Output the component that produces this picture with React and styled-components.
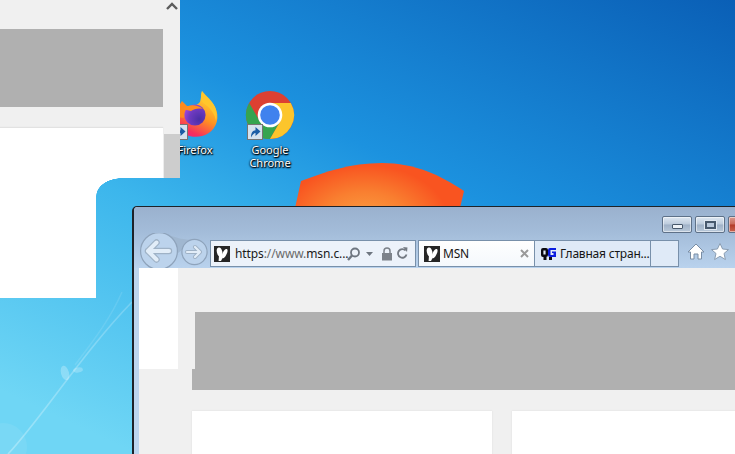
import React from "react";
import styled, { createGlobalStyle } from "styled-components";

const Global = createGlobalStyle`
  html, body { margin: 0; padding: 0; width: 735px; height: 454px; overflow: hidden; }
  #root { width: 735px; height: 454px; }
`;

const Desktop = styled.div`
  position: relative;
  width: 735px;
  height: 454px;
  overflow: hidden;
  font-family: "Noto Sans", "Open Sans", sans-serif;
  background: linear-gradient(205deg, #0a5fb6 0%, #1c92df 40%, #3cb6ec 60%, #6fd6f5 92%);
`;

const Wallpaper = styled.svg`
  position: absolute;
  inset: 0;
`;

const Shortcut = styled.div`
  position: absolute;
  left: ${(p) => p.$x}px;
  top: 90px;
  width: 72px;
  display: flex;
  flex-direction: column;
  align-items: center;
`;

const IconFrame = styled.div`
  position: relative;
  width: 50px;
  height: 50px;
  margin-bottom: 3px;
`;

const Arrow = styled.svg`
  position: absolute;
  left: ${(p) => p.$left}px;
  bottom: 0;
`;

const ShortcutLabel = styled.span`
  color: #fff;
  font-size: 11px;
  line-height: 13px;
  text-align: center;
  text-shadow: 0 1px 2px #000, 0 0 2px #000, 1px 1px 1px #012;
`;

/* left window */
const LeftWindow = styled.div`
  position: absolute;
  left: 0;
  top: 0;
  width: 180px;
`;

const UpperPane = styled.div`
  display: flex;
  height: 178px;
  background: #f0f0f0;
`;

const LeftMain = styled.div`
  width: 163px;
  display: flex;
  flex-direction: column;
  padding-top: 29px;
`;

const GrayBlock = styled.div`
  height: 78px;
  background: #b0b0b0;
`;

const WhitePanel = styled.div`
  flex: 1;
  margin-top: 21px;
  background: #fff;
  box-shadow: 0 -1px 1px #e2e2e2;
`;

const ScrollTrack = styled.div`
  flex: 1;
  display: flex;
  flex-direction: column;
  align-items: center;
  justify-content: space-between;
  padding-left: 1px;
`;

const ScrollUp = styled.svg`
  display: block;
  margin-top: 2px;
  margin-right: 1px;
`;

const ScrollThumb = styled.div`
  align-self: stretch;
  height: 44px;
  background: #cdcdcd;
`;

const LowerPane = styled.div`
  position: relative;
  width: 96px;
  height: 120px;
  background: #fff;
  &::after {
    content: "";
    position: absolute;
    left: 96px;
    top: 0;
    width: 26px;
    height: 18px;
    background: radial-gradient(ellipse 26px 18px at 100% 100%, transparent 98%, #fff 100%);
  }
`;

/* IE window */
const BrowserWindow = styled.div`
  position: absolute;
  left: 132px;
  top: 206px;
  width: 640px;
  height: 300px;
  box-sizing: border-box;
  border: 1px solid #1d2228;
  border-left-width: 2px;
  border-radius: 5px 5px 0 0;
  padding: 0 0 0 5px;
  display: flex;
  flex-direction: column;
  background: #bcd5ee;
`;

const Frame = styled.div`
  height: 61px;
  flex: none;
  display: flex;
  flex-direction: column;
  margin-left: -5px;
  padding-left: 5px;
  border-radius: 4px 4px 0 0;
  background: linear-gradient(180deg, #9ab1ce 0%, #a3bcd9 40%, #b9d2ed 100%);
`;

const TitleBar = styled.div`
  height: 33px;
  flex: none;
  display: flex;
  gap: 3px;
  padding: 9px 0 0 523px;
  box-sizing: border-box;
`;

const WinButton = styled.div`
  flex: none;
  box-sizing: border-box;
  width: 30px;
  height: 17px;
  display: flex;
  align-items: center;
  justify-content: center;
  border: 1px solid #5e7188;
  border-radius: 2px;
  background: ${(p) =>
    p.$close
      ? "linear-gradient(180deg,#d99a8f 0%,#c8695a 48%,#b23a2a 52%,#c9634f 100%)"
      : "linear-gradient(180deg,#dfe8f2 0%,#bccbdc 48%,#9fb1c7 52%,#b9c9da 100%)"};
  box-shadow: inset 0 0 0 1px rgba(255, 255, 255, 0.5);
`;

const MinGlyph = styled.div`
  width: 9px;
  height: 3px;
  margin-top: 3px;
  background: #eef3f8;
  border: 1px solid #48596c;
  border-radius: 1px;
`;

const MaxGlyph = styled.div`
  width: 7px;
  height: 4px;
  border: 2px solid #48596c;
  outline: 1px solid #dfe7f0;
  background: #b9c8da;
`;

const Toolbar = styled.div`
  height: 28px;
  display: flex;
  align-items: flex-start;
  position: relative;
`;

const NavSvg = styled.svg`
  position: absolute;
  left: -5px;
  top: -7px;
`;

const AddressBar = styled.div`
  margin-left: 71px;
  box-sizing: border-box;
  width: 206px;
  height: 27px;
  flex: none;
  display: flex;
  align-items: center;
  padding-left: 3px;
  border: 1px solid #7890aa;
  background: #ecf2fa;
`;

const Favicon = styled.svg`
  flex: none;
  display: block;
`;

const Url = styled.span`
  margin-left: 5px;
  width: 112px;
  flex: none;
  font-size: 12px;
  letter-spacing: -0.1px;
  color: #6a6a6a;
  white-space: nowrap;
  & b { font-weight: 400; color: #1a1a1a; }
`;

const AddressTools = styled.svg`
  flex: none;
  display: block;
`;

const Tabs = styled.div`
  margin-left: 2px;
  display: flex;
  flex: none;
  height: 27px;
`;

const Tab = styled.div`
  box-sizing: border-box;
  width: ${(p) => p.$w}px;
  height: 27px;
  display: flex;
  align-items: center;
  padding-left: ${(p) => p.$pad}px;
  border: 1px solid #7890aa;
  border-left-width: ${(p) => (p.$first ? 1 : 0)}px;
  background: ${(p) => (p.$active ? "linear-gradient(180deg,#fff,#f4f8fc)" : "#dfeaf7")};
  font-size: 12px;
  letter-spacing: -0.2px;
  color: #151515;
  white-space: nowrap;
`;

const TabTitle = styled.span`
  margin-left: ${(p) => p.$gap}px;
  flex: ${(p) => (p.$grow ? 1 : "none")};
`;

const TabClose = styled.svg`
  flex: none;
  margin-right: 5px;
`;

const CommandIcons = styled.svg`
  flex: none;
  margin-left: 9px;
  margin-top: 3px;
`;

const Content = styled.div`
  flex: 1;
  position: relative;
  background: #f0f0f0;
  display: flex;
  flex-direction: column;
`;

const TopRow = styled.div`
  display: flex;
  height: 101px;
  flex: none;
`;

const WhiteStub = styled.div`
  width: 39px;
  background: #fff;
`;

const Banner = styled.div`
  flex: 1;
  margin: 44px 0 0 17px;
  background: #b0b0b0;
`;

const BannerFoot = styled.div`
  height: 21px;
  flex: none;
  margin-left: 53px;
  background: #b0b0b0;
`;

const Cards = styled.div`
  margin: 21px 0 0 53px;
  display: flex;
  gap: 20px;
  flex: 1;
`;

const Card = styled.div`
  width: 300px;
  flex: none;
  background: #fff;
  box-shadow: 0 0 2px #dcdcdc;
`;

const MsnIcon = () => (
  <Favicon width="16" height="16" viewBox="0 0 16 16">
    <rect width="16" height="16" fill="#262626" />
    <ellipse cx="5.6" cy="6" rx="2.7" ry="4.6" transform="rotate(-14 5.6 6)" fill="#fff" />
    <ellipse cx="10.6" cy="7.6" rx="2" ry="5" transform="rotate(26 10.6 7.6)" fill="#fff" />
    <path d="M5 9 L8.2 9 L8.6 12 L7 15 L4.6 15 Z" fill="#fff" />
  </Favicon>
);

const DgIcon = () => (
  <Favicon width="16" height="14" viewBox="0 0 16 14">
    <path d="M1 3 Q1 1 3 1 L6 1 Q8 1 8 3 L8 8 Q8 10 6 10 L3 10 Q1 10 1 8 Z M3.4 3.4 L3.4 7.6 L5.6 7.6 L5.6 3.4 Z" fill="#0b0b12" fillRule="evenodd" />
    <rect x="3.5" y="10" width="3" height="3" fill="#0b0b12" />
    <path d="M8 3 Q8 1 10 1 L16 1 L16 3 L10.5 3 L10.5 8 L13.5 8 L13.5 6 L12 6 L12 4.5 L16 4.5 L16 10 L10 10 Q8 10 8 8 Z" fill="#0a1de0" />
    <rect x="9" y="10" width="3" height="3" fill="#0b0b12" />
  </Favicon>
);

const ShortcutArrow = () => (
  <Arrow $left={2} width="16" height="16" viewBox="0 0 16 16">
    <rect x=".5" y=".5" width="15" height="15" fill="#d5e2ef" stroke="#747474" />
    <path d="M4 13.5 C4 8.5 6 6.5 8.5 6.3 L8.5 3 L13.5 7.6 L8.5 12 L8.5 9 C7 9 5.5 10.5 4 13.5 Z" fill="#1c5da6" />
  </Arrow>
);

export default function App() {
  return (
    <Desktop>
      <Global />
      <Wallpaper width="735" height="454" viewBox="0 0 735 454">
        <defs>
          <radialGradient id="orange" gradientUnits="userSpaceOnUse" cx="365" cy="225" r="85" gradientTransform="matrix(1 0 0 0.7 0 67)">
            <stop offset="0" stopColor="#fba545" />
            <stop offset="0.55" stopColor="#f97f30" />
            <stop offset="1" stopColor="#f95420" />
          </radialGradient>
          <linearGradient id="streak" x1="0" y1="1" x2="1" y2="0">
            <stop offset="0" stopColor="#fff" stopOpacity="0.3" />
            <stop offset="1" stopColor="#fff" stopOpacity="0.2" />
          </linearGradient>
        </defs>
        <path d="M295 208 L301 181 C325 172 350 163 382 163 C415 163 440 175 464 191 L460 208 Z" fill="url(#orange)" />
        <path d="M8 454 C40 420 85 350 132 302" fill="none" stroke="url(#streak)" strokeWidth="1.6" />
        <path d="M75 365 C90 345 110 320 122 292" fill="none" stroke="#fff" strokeOpacity="0.1" strokeWidth="1.5" />
        <ellipse cx="65" cy="373" rx="4" ry="7.5" transform="rotate(-15 65 373)" fill="#fff" fillOpacity="0.26" />
        <ellipse cx="78" cy="370" rx="5" ry="2.5" transform="rotate(-10 78 370)" fill="#fff" fillOpacity="0.24" />
        <circle cx="3" cy="447" r="24" fill="#fff" fillOpacity="0.07" />
      </Wallpaper>

      <Shortcut $x={159}>
        <IconFrame>
          <svg width="50" height="50" viewBox="0 0 50 50">
            <defs>
              <linearGradient id="ffbody" x1="0.75" y1="0" x2="0.25" y2="1">
                <stop offset="0" stopColor="#ffdd3c" />
                <stop offset="0.5" stopColor="#ff9420" />
                <stop offset="0.85" stopColor="#f8305c" />
                <stop offset="1" stopColor="#f02080" />
              </linearGradient>
              <radialGradient id="ffglobe" cx="0.7" cy="0.7" r="0.8">
                <stop offset="0" stopColor="#4a2fa6" />
                <stop offset="0.6" stopColor="#6f3ac0" />
                <stop offset="1" stopColor="#a848e0" />
              </radialGradient>
            </defs>
            <path d="M32 1 C34 8 41 10 45 17 C50 27 47 38 38 43.5 C28 49.5 14 47 7 38 C3 32 2 26 4 18 L10 22 C16 15 26 18 30 12 C31 9 31 5 32 1 Z" fill="url(#ffbody)" />
            <path d="M32 1 C36 6 42 10 45 17 C47 22 47 28 46 31 C45 24 40 17 33 13 C30 9 31 5 32 1 Z" fill="#ffc62c" />
            <path d="M2 15 L8 17 L12 11 L17 16 L27 16 L21 24 L13 28 L4 26 Z" fill="#ff8a1e" />
            <circle cx="25" cy="25" r="10.6" fill="url(#ffglobe)" />
            <path d="M13 19 C18 14 27 14 33 19 C28 18 24 19 21 21 C18 20 15 20 13 19 Z" fill="#ff8d1f" />
          </svg>
          <ShortcutArrow />
        </IconFrame>
        <ShortcutLabel>Firefox</ShortcutLabel>
      </Shortcut>

      <Shortcut $x={234}>
        <IconFrame>
          <svg width="50" height="50" viewBox="0 0 50 50">
            <circle cx="25" cy="25" r="24" fill="#dc4032" />
            <path d="M14.6 31 L4.2 13 A24 24 0 0 0 25 49 L35.4 31 Z" fill="#35a450" />
            <path d="M25 13 L45.8 13 A24 24 0 0 1 25 49 L35.4 31 Z" fill="#fcc52c" />
            <circle cx="25" cy="25" r="12.3" fill="#fff" />
            <circle cx="25" cy="25" r="9.8" fill="#3f82ee" />
          </svg>
          <ShortcutArrow />
        </IconFrame>
        <ShortcutLabel>Google<br />Chrome</ShortcutLabel>
      </Shortcut>

      <LeftWindow>
        <UpperPane>
          <LeftMain>
            <GrayBlock />
            <WhitePanel />
          </LeftMain>
          <ScrollTrack>
            <ScrollUp width="12" height="8" viewBox="0 0 12 8">
              <path d="M1 7 L6 2 L11 7" fill="none" stroke="#5c5c5c" strokeWidth="2.4" />
            </ScrollUp>
            <ScrollThumb />
          </ScrollTrack>
        </UpperPane>
        <LowerPane />
      </LeftWindow>

      <BrowserWindow>
        <Frame>
          <TitleBar>
            <WinButton><MinGlyph /></WinButton>
            <WinButton><MaxGlyph /></WinButton>
            <WinButton $close />
          </TitleBar>
          <Toolbar>
            <NavSvg width="76" height="35" viewBox="0 0 76 35">
              <path d="M25 0 C38 1 38 6 60 7 L44 20 Z" fill="#a0b7d0" />
              <circle cx="25" cy="18" r="18.4" fill="#bcd3ec" stroke="#8ea3bb" strokeWidth="1.2" />
              <path d="M35 18 H14 M22.5 9.5 L14 18 L22.5 26.5" fill="none" stroke="#9fb2c6" strokeWidth="6.4" strokeLinejoin="round" strokeLinecap="round" />
              <path d="M35 18 H14 M22.5 9.5 L14 18 L22.5 26.5" fill="none" stroke="#e2edf8" strokeWidth="4" strokeLinejoin="round" strokeLinecap="round" />
              <circle cx="60.5" cy="19" r="12.6" fill="#bcd3ec" stroke="#8ea3bb" strokeWidth="1.2" />
              <path d="M53 19 H66 M61 14 L66 19 L61 24" fill="none" stroke="#9fb2c6" strokeWidth="4" strokeLinejoin="round" strokeLinecap="round" />
              <path d="M53 19 H66 M61 14 L66 19 L61 24" fill="none" stroke="#e2edf8" strokeWidth="2.2" strokeLinejoin="round" strokeLinecap="round" />
            </NavSvg>
            <AddressBar>
              <MsnIcon />
              <Url><b>https</b>://www.<b>msn.c...</b></Url>
              <AddressTools width="64" height="16" viewBox="0 0 64 16">
                <circle cx="8" cy="6.5" r="4" fill="none" stroke="#6e7680" strokeWidth="1.8" />
                <path d="M5 9.5 L1 14" stroke="#6e7680" strokeWidth="2.4" />
                <path d="M19 6 L26 6 L22.5 10 Z" fill="#6e7680" />
                <path d="M35 7 L45 7 L45 14.5 L35 14.5 Z" fill="#7c828a" />
                <path d="M37 7 L37 5 A3 3 0 0 1 43 5 L43 7" fill="none" stroke="#7c828a" strokeWidth="1.5" />
                <path d="M59.5 8.5 A4.3 4.3 0 1 1 58.5 4.5" fill="none" stroke="#737a83" strokeWidth="1.8" />
                <path d="M56 1 L60.5 1.5 L60 6 Z" fill="#737a83" />
              </AddressTools>
            </AddressBar>
            <Tabs>
              <Tab $w={117} $pad={5} $first $active>
                <MsnIcon />
                <TabTitle $gap={3} $grow>MSN</TabTitle>
                <TabClose width="9" height="9" viewBox="0 0 9 9">
                  <path d="M1 1 L8 8 M8 1 L1 8" stroke="#9a9a9a" strokeWidth="2" />
                </TabClose>
              </Tab>
              <Tab $w={116} $pad={5}>
                <DgIcon />
                <TabTitle $gap={4}>Главная стран...</TabTitle>
              </Tab>
              <Tab $w={28} $pad={0} />
            </Tabs>
            <CommandIcons width="42" height="18" viewBox="0 0 42 18">
              <path d="M8 1 L16 9 L13.5 9 L13.5 16 L10 16 L10 11 L6 11 L6 16 L2.5 16 L2.5 9 L0 9 Z" fill="#fff" stroke="#7a8ea5" strokeWidth="1" strokeLinejoin="round" />
              <path d="M32 .5 L34.6 6 L40.5 6.6 L36 10.5 L37.4 16.5 L32 13.3 L26.6 16.5 L28 10.5 L23.5 6.6 L29.4 6 Z" fill="#fff" stroke="#8a9db2" strokeWidth="1" strokeLinejoin="round" />
            </CommandIcons>
          </Toolbar>
        </Frame>
        <Content>
          <TopRow>
            <WhiteStub />
            <Banner />
          </TopRow>
          <BannerFoot />
          <Cards>
            <Card />
            <Card />
          </Cards>
        </Content>
      </BrowserWindow>
    </Desktop>
  );
}
